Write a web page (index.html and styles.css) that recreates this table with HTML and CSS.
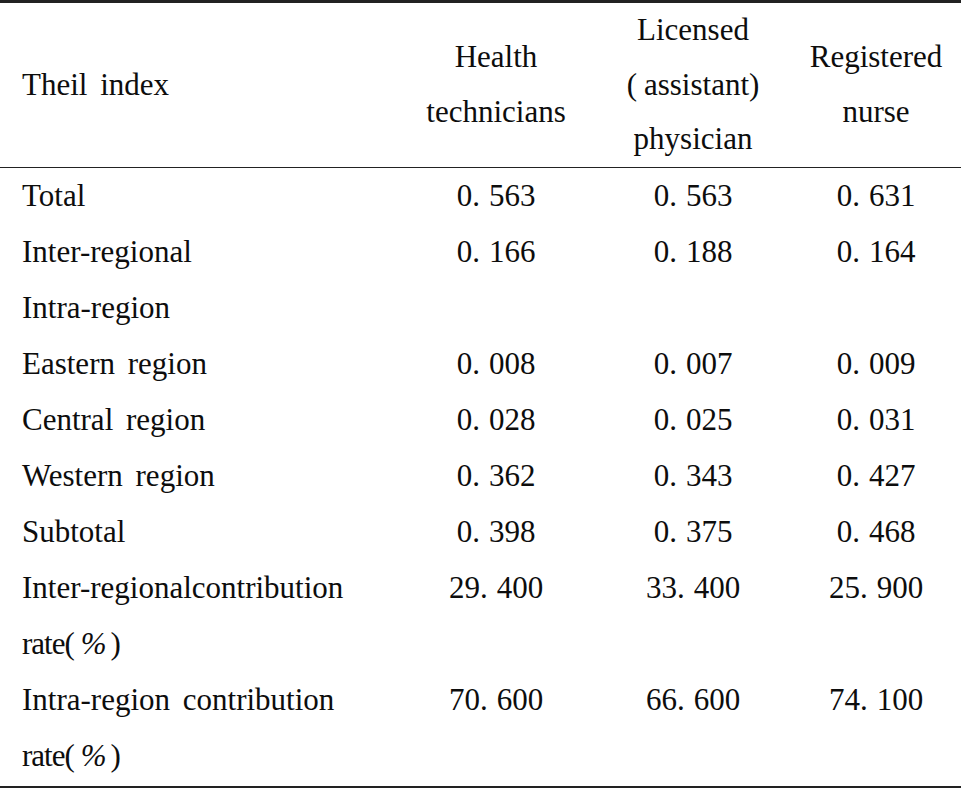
FILE: index.html
```html
<!DOCTYPE html>
<html lang="en">
<head>
<meta charset="utf-8">
<title>Theil index</title>
<link rel="stylesheet" href="styles.css">
</head>
<body>
<table class="theil">
  <colgroup>
    <col class="c1"><col class="c2"><col class="c3"><col class="c4">
  </colgroup>
  <thead>
    <tr>
      <th class="label">Theil index</th>
      <th>Health<br>technicians</th>
      <th>Licensed<br>(<span class="pgap"></span>assistant)<br>physician</th>
      <th>Registered<br>nurse</th>
    </tr>
  </thead>
  <tbody>
    <tr><td class="label">Total</td><td>0.<span class="gap"></span>563</td><td>0.<span class="gap"></span>563</td><td>0.<span class="gap"></span>631</td></tr>
    <tr><td class="label">Inter-regional</td><td>0.<span class="gap"></span>166</td><td>0.<span class="gap"></span>188</td><td>0.<span class="gap"></span>164</td></tr>
    <tr><td class="label">Intra-region</td><td></td><td></td><td></td></tr>
    <tr><td class="label">Eastern region</td><td>0.<span class="gap"></span>008</td><td>0.<span class="gap"></span>007</td><td>0.<span class="gap"></span>009</td></tr>
    <tr><td class="label">Central region</td><td>0.<span class="gap"></span>028</td><td>0.<span class="gap"></span>025</td><td>0.<span class="gap"></span>031</td></tr>
    <tr><td class="label">Western region</td><td>0.<span class="gap"></span>362</td><td>0.<span class="gap"></span>343</td><td>0.<span class="gap"></span>427</td></tr>
    <tr><td class="label">Subtotal</td><td>0.<span class="gap"></span>398</td><td>0.<span class="gap"></span>375</td><td>0.<span class="gap"></span>468</td></tr>
    <tr><td class="label">Inter-regionalcontribution<br><span class="tight">rate(</span><span class="pgap"></span><i class="pct">%</i><span class="sgap"></span>)</td><td>29.<span class="gap"></span>400</td><td>33.<span class="gap"></span>400</td><td>25.<span class="gap"></span>900</td></tr>
    <tr class="last"><td class="label">Intra-region contribution<br><span class="tight">rate(</span><span class="pgap"></span><i class="pct">%</i><span class="sgap"></span>)</td><td>70.<span class="gap"></span>600</td><td>66.<span class="gap"></span>600</td><td>74.<span class="gap"></span>100</td></tr>
  </tbody>
</table>
</body>
</html>
```

FILE: styles.css
```css
html, body {
  margin: 0;
  padding: 0;
  background: #ffffff;
}

.theil {
  width: 961px;
  border-collapse: collapse;
  table-layout: fixed;
  font-family: "Liberation Serif", Tinos, "Times New Roman", serif;
  font-size: 31px;
  color: #0d0d0d;
  word-spacing: 5px;
  border-top: 3px solid #222222;
  border-bottom: 3px solid #222222;
}

.c1 { width: 397px; }
.c2 { width: 198px; }
.c3 { width: 196px; }
.c4 { width: 170px; }

.theil th {
  font-weight: normal;
  line-height: 54.5px;
  text-align: center;
  vertical-align: middle;
  padding: 0;
  border-bottom: 1px solid #222222;
}

.theil td {
  line-height: 56px;
  text-align: center;
  vertical-align: top;
  padding: 0;
}

.theil .label {
  text-align: left;
  padding-left: 22px;
}

.theil .last td {
  padding-bottom: 2px;
}

.gap {
  display: inline-block;
  width: 9px;
}

.pgap {
  display: inline-block;
  width: 7px;
}

.sgap {
  display: inline-block;
  width: 4px;
}

.tight {
  letter-spacing: -1px;
}

.pct {
  font-style: italic;
}
```
